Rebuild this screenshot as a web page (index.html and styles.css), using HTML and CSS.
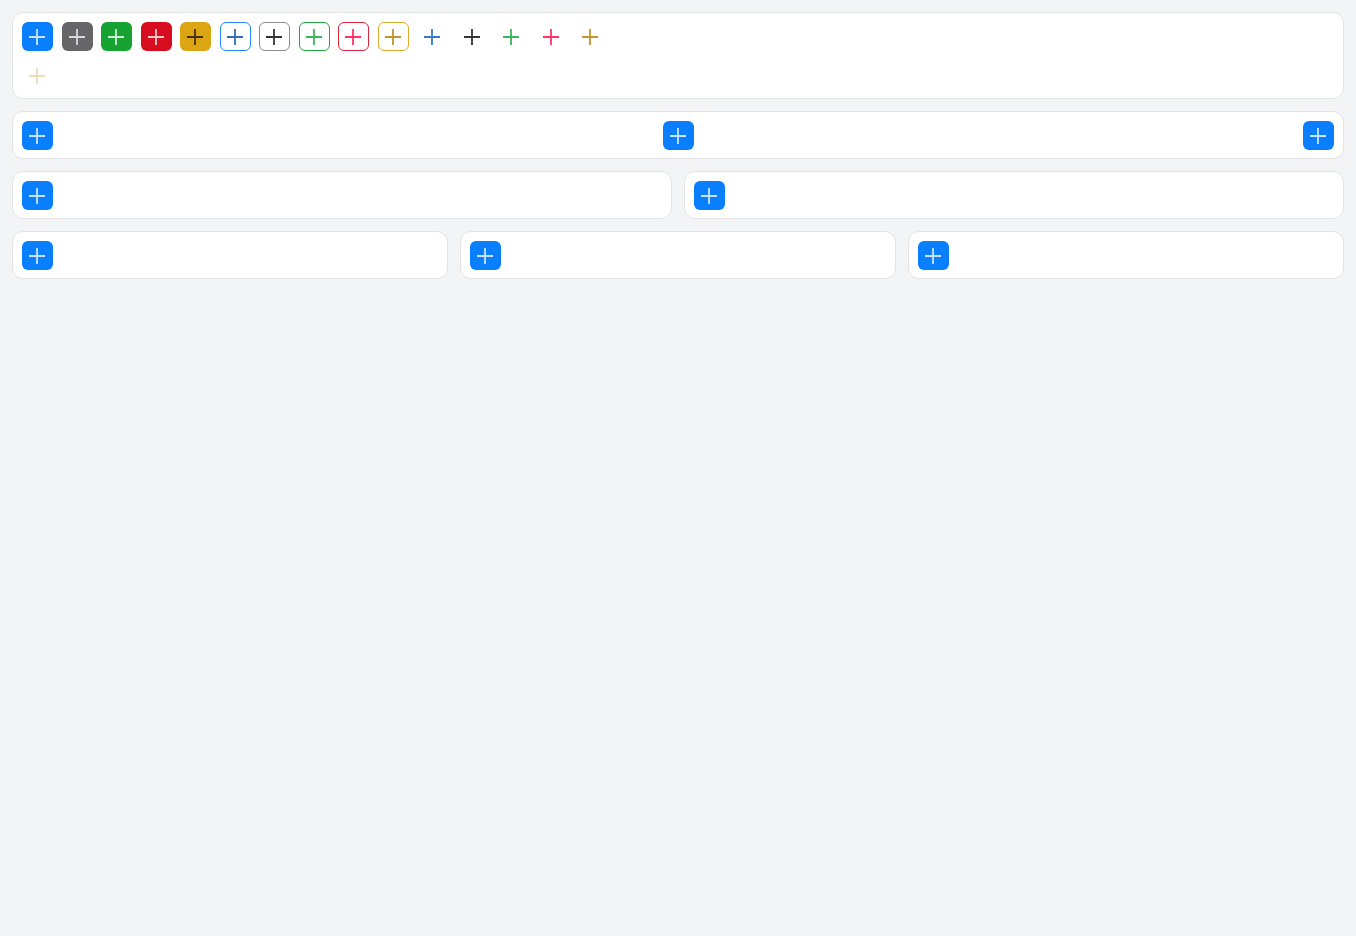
FILE: index.html
```html
<!DOCTYPE html>
<html>
<head>
<meta charset="utf-8">
<link rel="stylesheet" href="styles.css">
</head>
<body>
<svg width="0" height="0" class="defs">
  <defs>
    <symbol id="plus" viewBox="0 0 16 16"><path d="M8 0v16M0 8h16" stroke="currentColor" stroke-width="1.8" fill="none"/></symbol>
  </defs>
</svg>
<div class="card">
  <div class="row">
    <button class="btn solid blue"><svg><use href="#plus"/></svg></button>
    <button class="btn solid gray"><svg><use href="#plus"/></svg></button>
    <button class="btn solid green"><svg><use href="#plus"/></svg></button>
    <button class="btn solid red"><svg><use href="#plus"/></svg></button>
    <button class="btn solid gold"><svg><use href="#plus"/></svg></button>
    <button class="btn outline blue"><svg><use href="#plus"/></svg></button>
    <button class="btn outline gray"><svg><use href="#plus"/></svg></button>
    <button class="btn outline green"><svg><use href="#plus"/></svg></button>
    <button class="btn outline red"><svg><use href="#plus"/></svg></button>
    <button class="btn outline gold"><svg><use href="#plus"/></svg></button>
    <button class="btn ghost blue"><svg><use href="#plus"/></svg></button>
    <button class="btn ghost gray"><svg><use href="#plus"/></svg></button>
    <button class="btn ghost green"><svg><use href="#plus"/></svg></button>
    <button class="btn ghost red"><svg><use href="#plus"/></svg></button>
    <button class="btn ghost gold"><svg><use href="#plus"/></svg></button>
  </div>
  <div class="row">
    <button class="btn ghost gold disabled"><svg><use href="#plus"/></svg></button>
  </div>
</div>
<div class="card spread">
  <button class="btn solid blue"><svg><use href="#plus"/></svg></button>
  <button class="btn solid blue"><svg><use href="#plus"/></svg></button>
  <button class="btn solid blue"><svg><use href="#plus"/></svg></button>
</div>
<div class="grid two">
  <div class="card"><button class="btn solid blue"><svg><use href="#plus"/></svg></button></div>
  <div class="card"><button class="btn solid blue"><svg><use href="#plus"/></svg></button></div>
</div>
<div class="grid three">
  <div class="card"><button class="btn solid blue"><svg><use href="#plus"/></svg></button></div>
  <div class="card"><button class="btn solid blue"><svg><use href="#plus"/></svg></button></div>
  <div class="card"><button class="btn solid blue"><svg><use href="#plus"/></svg></button></div>
</div>
</body>
</html>
```
FILE: styles.css
```css
html, body { margin: 0; padding: 0; }
body {
  background: #f3f4f6;
  padding: 12px;
  font-family: "Liberation Sans", Arial, sans-serif;
  display: flex;
  flex-direction: column;
  gap: 12px;
}
.defs { position: absolute; }
.card {
  background: #fff;
  border: 1px solid #e3e4e6;
  border-radius: 11px;
  padding: 9px 9px 8px;
  display: flex;
  flex-direction: column;
  gap: 10px;
}
.card.spread {
  flex-direction: row;
  justify-content: space-between;
}
.row {
  display: flex;
  gap: 8.5px;
}
.grid { display: grid; gap: 12px; }
.grid.two { grid-template-columns: 1fr 1fr; }
.grid.three { grid-template-columns: 1fr 1fr 1fr; }
.grid .card { align-items: flex-start; }
.btn {
  box-sizing: border-box;
  width: 31px;
  height: 29px;
  border-radius: 6px;
  border: 1px solid transparent;
  padding: 0 0 0 6px;
  margin: 0;
  display: flex;
  align-items: center;
  justify-content: flex-start;
  background: transparent;
  flex: none;
}
.btn svg { width: 16px; height: 16px; display: block; }
.solid.blue { background: #0a7ffe; color: rgba(255,255,255,0.78); }
.solid.gray { background: #666668; color: rgba(255,255,255,0.75); }
.solid.green { background: #16a332; color: rgba(255,255,255,0.8); }
.solid.red { background: #d70d1f; color: rgba(255,255,255,0.78); }
.solid.gold { background: #dba513; color: #4b2e00; }
.outline.blue { border-color: #2589ff; color: #2e6fc4; }
.outline.gray { border-color: #8c8c8e; color: #333; }
.outline.green { border-color: #1aa83a; color: #3bb65b; }
.outline.red { border-color: #d9243c; color: #ff3568; }
.outline.gold { border-color: #dcab2c; color: #c2962e; }
.ghost.blue { color: #3a78c8; }
.ghost.gray { color: #333; }
.ghost.green { color: #3bb65b; }
.ghost.red { color: #ff3568; }
.ghost.gold { color: #c2962e; }
.ghost.gold.disabled { color: #ecdcb8; }
```
